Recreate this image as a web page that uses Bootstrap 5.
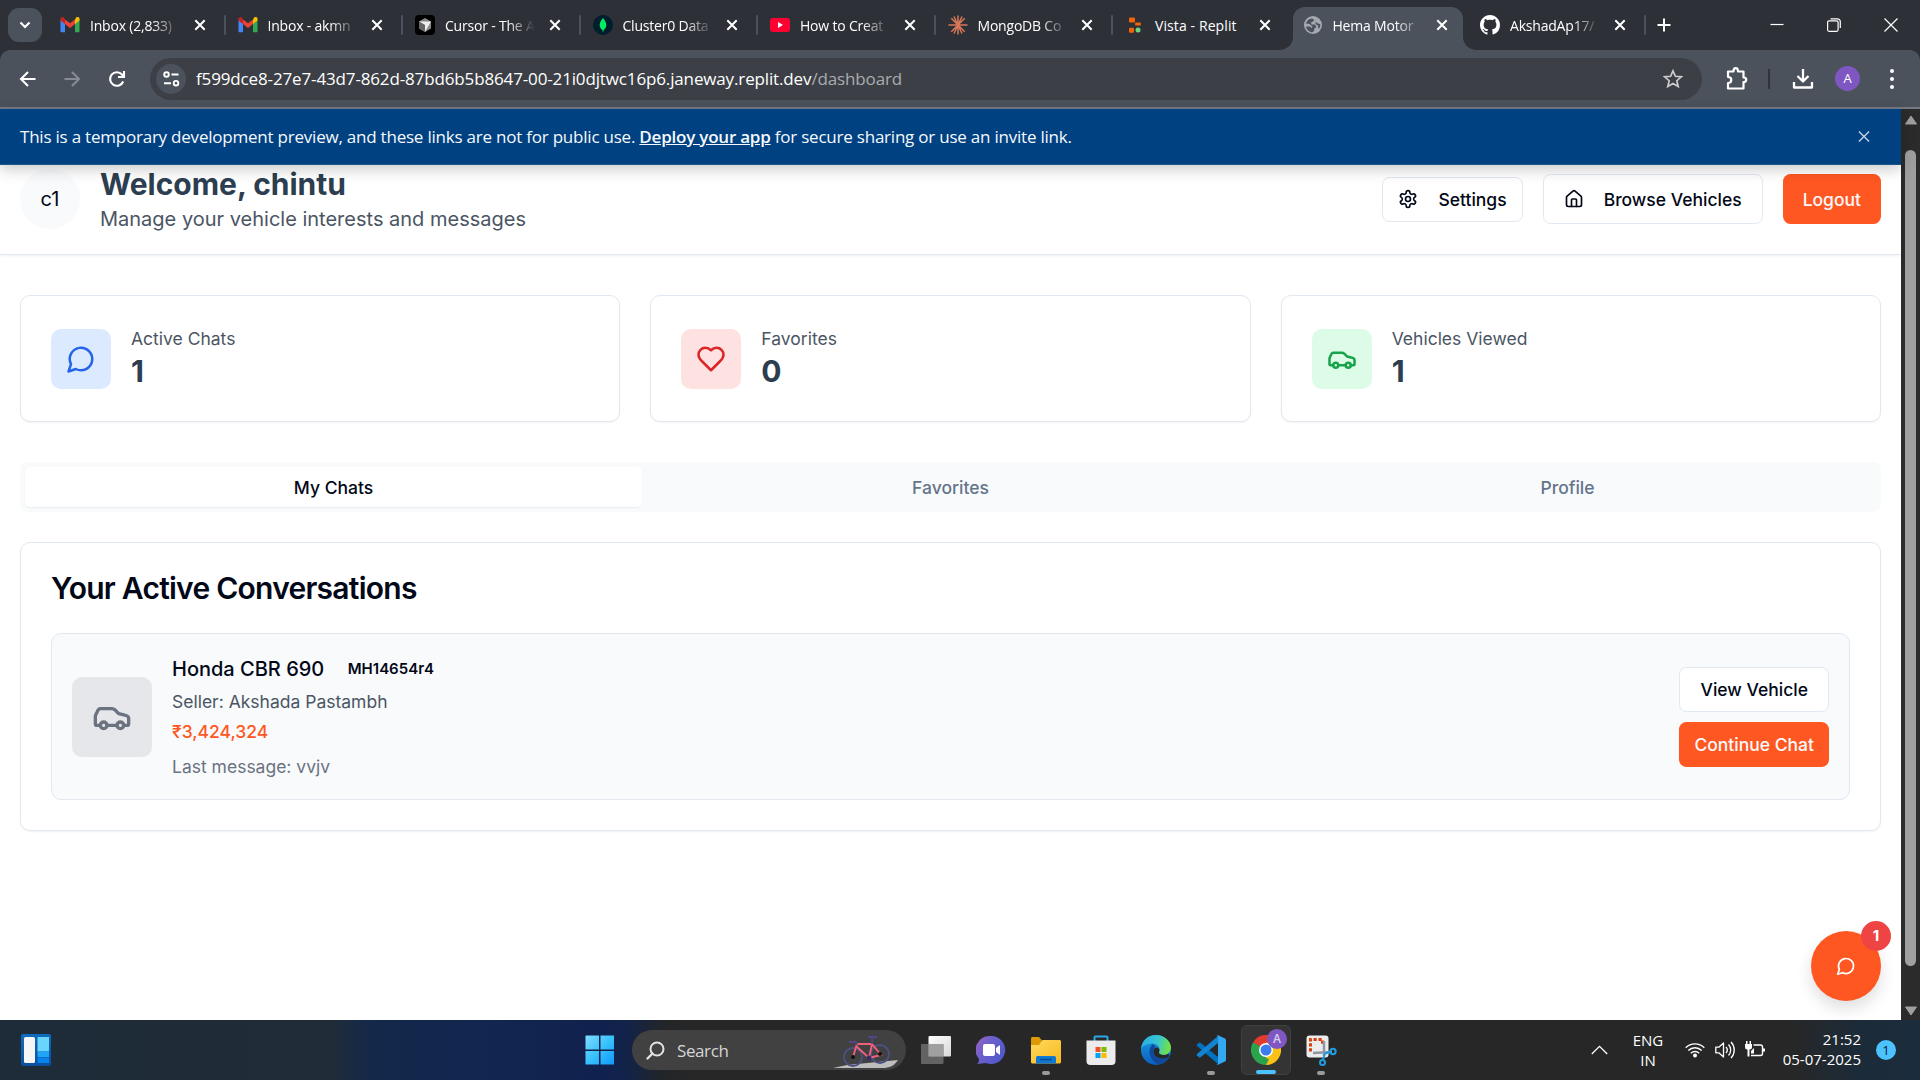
<!DOCTYPE html>
<html lang="en">
<head>
<meta charset="utf-8">
<title>Hema Motor</title>
<meta name="viewport" content="width=device-width, initial-scale=1">
<link href="https://cdn.jsdelivr.net/npm/bootstrap@5.3.0/dist/css/bootstrap.min.css" rel="stylesheet">
<style>
body{width:1920px;height:1080px;overflow:hidden;background:#fff;font-family:Inter,"Noto Sans",sans-serif;font-size:17.5px;line-height:25px;color:#020817}
svg{display:block;flex:none}
.ui{font-family:"Open Sans","Noto Sans",sans-serif}
/* browser chrome */
.tabstrip{height:50px;background:#2e3038;color:#fff;font-size:14px;line-height:20px}
.tabsearch{width:34px;height:34px;border-radius:11px;background:#4c525c;margin:8px 5px 0 8px}
.btab{width:177.5px;height:50px;padding:0 19px 0 13px;position:relative}
.btab .fav{width:20px;height:20px;flex:none;margin-right:10px}
.btab .ttl{min-width:86px;padding-top:1px;white-space:nowrap;letter-spacing:-.2px;-webkit-mask-image:linear-gradient(90deg,#000 62px,transparent 90px);mask-image:linear-gradient(90deg,#000 62px,transparent 90px)}
.btab .ttl.whole{-webkit-mask-image:none;mask-image:none;letter-spacing:.1px}
.btab .cls{margin-left:auto}
.btab.sep::after{content:"";position:absolute;right:-1px;top:15px;width:2px;height:20px;background:#4c525c;border-radius:1px}
.btab.live .plate{position:absolute;left:-11px;top:7px;z-index:0}
.btab.live>*:not(.plate){position:relative;z-index:1}
.toolbar-wrap{background:#2e3038}
.toolbar{height:59px;background:#4c525c;border-bottom:2px solid #757b85;border-radius:10px 10px 0 0}
.omni{width:1552px;height:42px;border-radius:21px;background:#3c3f46;margin-left:23px;padding:0 19px 0 6px}
.siteinfo{width:30px;height:30px;border-radius:50%;background:#4c525c;margin-right:10px}
.url{font-size:17px;color:#fff;letter-spacing:-.14px;white-space:nowrap}
.url i{font-style:normal;color:#a9acb1}
.pfp{width:25px;height:25px;border-radius:50%;background:#7e57c2;font-size:13px;line-height:25px;color:#fff}
/* page */
.viewport{height:911px}
.pagecol{width:1901px;position:relative}
.banner{height:56px;background:#004182;border-bottom:1px solid #1c548e;color:#f5f9fc;font-size:17px;letter-spacing:-.22px;padding:0 31px 0 20px;position:relative;z-index:2;box-shadow:0 4px 14px rgba(0,0,0,.22);white-space:nowrap}
.banner a{color:#f5f9fc;font-weight:600}
.pagehead{height:91px;margin-top:-1px;padding:0 20px 20px;border-bottom:1px solid #e2e8f0;box-shadow:0 1px 3px rgba(0,0,0,.06);background:#fff}
.avatar{width:60px;height:60px;border-radius:50%;background:#f8fafc;font-size:20px}
.h-welcome{font-size:30px;line-height:40px;font-weight:700;color:#2c3e50;margin:0}
.sub{font-size:20px;line-height:30px;color:#4b5563;margin:0}
.xbtn{height:50px;border:1px solid #e2e8f0;border-radius:7.5px;background:#fff;font-weight:500;font-size:17.5px;color:#020817;padding:0 20px;white-space:nowrap;display:inline-flex;align-items:center;justify-content:center}
.xbtn.short{height:45px;padding:0 15px}
.xbtn.fire{background:#ff5722;border:0;color:#f8fafc}
.panel{border:1px solid #e2e8f0;border-radius:10px;background:#fff;box-shadow:0 1px 2px rgba(0,0,0,.05)}
.stats{gap:30px;padding:40px 20px 0}
.stat{flex:1 1 0;height:127px;padding:0 30px}
.chip{width:60px;height:60px;border-radius:10px}
.stat .lbl{color:#4b5563}
.stat .num{font-size:30px;line-height:40px;font-weight:700;color:#2c3e50}
.seg{height:50px;margin:40px 20px 0;padding:5px;border-radius:7.5px;background:#f8fafc;color:#64748b;font-weight:500}
.seg div{flex:1 1 0;height:40px;line-height:41px;text-align:center;border-radius:5px}
.seg .on{background:#fff;color:#020817;box-shadow:0 1px 2px rgba(0,0,0,.06)}
.convs{margin:30px 20px 0;height:289px;padding:30px}
.convs h2{font-size:30px;line-height:30px;font-weight:600;letter-spacing:-.75px;margin:0 0 30px}
.conv{height:167px;background:#f8fafc;border:1px solid #e2e8f0;border-radius:10px;padding:19px 20px 20px}
.thumb{width:80px;height:80px;border-radius:10px;background:#e5e7eb;margin-top:2px}
.acts{gap:10px;margin-top:2px}
.fab{position:absolute;left:1811px;top:822px;width:70px;height:70px;border-radius:50%;background:#ff5722;box-shadow:0 8px 16px rgba(0,0,0,.13)}
.fab .cnt{position:absolute;left:50px;top:-10px;width:30px;height:30px;border-radius:50%;background:#ef4444;color:#fff;font-size:15px;font-weight:700;line-height:30px;text-align:center}
.sbar{width:19px;background:#2b2b2b}
.sbar .thumbbar{width:11px;height:816px;border-radius:6px;background:#9f9f9f}
/* taskbar */
.taskbar{height:60px;color:#fff;background:linear-gradient(90deg,#1e2c39 0,#202c37 330px,#14284a 370px,#122650 480px,#11214f 600px,#12234a 625px,#232527 665px,#272727 700px,#272727 1790px,#1c2b39 1860px,#1b2c3c 1920px)}
.searchbox{width:274px;height:40px;border-radius:20px;background:#414141;color:#d5d5d5;font-size:17px;letter-spacing:-.4px;padding:0 5px 0 14px;margin-left:17px;overflow:hidden}
.app{width:50px;height:50px;margin-right:5px;position:relative;border-radius:6px}
.app.on{background:#343434;border:1px solid #404040}
.app .pip{position:absolute;left:21px;bottom:0;width:8px;height:4px;border-radius:2px;background:#9a9a9a}
.app.on .pip{left:14px;width:20px;background:#4cc2ff}
.app .mini{position:absolute;left:25px;top:3px;width:20px;height:20px;border-radius:50%;background:#7e57c2;color:#d9cdee;font-size:12px;line-height:20px;text-align:center;font-weight:600}
.tray{font-size:15px;line-height:20px}
.note{width:20px;height:20px;border-radius:50%;background:#4cc2ff;color:#10202c;font-size:13px;line-height:20px;text-align:center}
</style>
<script src="https://cdn.jsdelivr.net/npm/bootstrap@5.3.0/dist/js/bootstrap.bundle.min.js"></script>
</head>
<body>
<svg width="0" height="0" class="position-absolute">
<defs>
<symbol id="x" viewBox="0 0 12 12"><path d="M1.300 1.300l9.400 9.400M10.700 1.300l-9.400 9.400" stroke="currentColor" stroke-width="2" fill="none"/></symbol>
<symbol id="gm" viewBox="0 0 20 20"><path d="M.5 4v12.200c0 .6.4 1 1 1H5V8z" fill="#4285f4"/><path d="M15 8v9.200h3.500c.6 0 1-.4 1-1V4z" fill="#34a853"/><path d="M15 4.500V9l4.500-3.500V4c0-2-2-2.500-3.300-1.500z" fill="#fbbc04"/><path d="M5 9V4.500l5 3.700 5-3.700V9l-5 3.900z" fill="#ea4335"/><path d="M.5 4v1.500L5 9V4.500L3.800 2.500C2.500 1.500.5 2.200.5 4z" fill="#c5221f"/></symbol>
<symbol id="msg" viewBox="0 0 24 24"><path d="M7.900 20A9 9 0 1 0 4 16.100L2 22Z" fill="none" stroke="currentColor" stroke-width="2" stroke-linecap="round" stroke-linejoin="round"/></symbol>
<symbol id="car" viewBox="0 0 24 24"><g fill="none" stroke="currentColor" stroke-width="2" stroke-linecap="round" stroke-linejoin="round"><path d="M19 17h2c.6 0 1-.4 1-1v-3c0-.9-.7-1.700-1.500-1.900C18.700 10.600 16 10 16 10s-1.300-1.400-2.200-2.300c-.5-.4-1.100-.7-1.800-.7H5c-.6 0-1.100.4-1.400.9l-1.400 2.900A3.700 3.700 0 0 0 2 12v4c0 .6.4 1 1 1h2"/><circle cx="7" cy="17" r="2"/><path d="M9 17h6"/><circle cx="17" cy="17" r="2"/></g></symbol>
</defs>
</svg>

<div class="tabstrip ui d-flex">
  <div class="tabsearch d-flex align-items-center justify-content-center"><svg width="12" height="8" viewBox="0 0 12 8"><path d="M1.500 1.500L6 6l4.500-4.500" fill="none" stroke="#fff" stroke-width="2.200"/></svg></div>
  <div class="btab sep d-flex align-items-center"><svg class="fav"><use href="#gm"/></svg><span class="ttl">Inbox (2,833)</span><svg class="cls" width="12" height="12"><use href="#x"/></svg></div>
  <div class="btab sep d-flex align-items-center"><svg class="fav"><use href="#gm"/></svg><span class="ttl">Inbox - akmn</span><svg class="cls" width="12" height="12"><use href="#x"/></svg></div>
  <div class="btab sep d-flex align-items-center"><svg class="fav" viewBox="0 0 20 20"><rect width="20" height="20" rx="4" fill="#000"/><path d="M10 3l6 3.500v7L10 17l-6-3.500v-7z" fill="#888"/><path d="M4 6.500h12L10 17V10z" fill="#eee"/><path d="M4 6.500L10 10v7l-6-3.500z" fill="#666"/></svg><span class="ttl">Cursor - The A</span><svg class="cls" width="12" height="12"><use href="#x"/></svg></div>
  <div class="btab sep d-flex align-items-center"><svg class="fav" viewBox="0 0 20 20"><circle cx="10" cy="10" r="10" fill="#001e2b"/><path d="M10 3c2 2.300 3.300 4.600 3.300 7 0 2.500-1.300 4-2.800 5.200l-.3 2h-.4l-.3-2C8 14 6.700 12.500 6.700 10c0-2.400 1.300-4.700 3.300-7z" fill="#00ed64"/></svg><span class="ttl">Cluster0 Data</span><svg class="cls" width="12" height="12"><use href="#x"/></svg></div>
  <div class="btab sep d-flex align-items-center"><svg class="fav" viewBox="0 0 20 20"><rect y="3" width="20" height="14" rx="3" fill="#ff0033"/><path d="M8 7l5 3-5 3z" fill="#fff"/></svg><span class="ttl">How to Creat</span><svg class="cls" width="12" height="12"><use href="#x"/></svg></div>
  <div class="btab sep d-flex align-items-center"><svg class="fav" viewBox="0 0 20 20"><path d="M10 .5v19M.5 10h19M3.300 3.300l13.400 13.400M16.700 3.300L3.300 16.700M6 1.500l8 17M14 1.500l-8 17" stroke="#d97757" stroke-width="1.500"/></svg><span class="ttl">MongoDB Co</span><svg class="cls" width="12" height="12"><use href="#x"/></svg></div>
  <div class="btab d-flex align-items-center"><svg class="fav" viewBox="0 0 20 20"><rect x="4" y="2.500" width="6" height="5" rx="1" fill="#f26207"/><rect x="10" y="7.500" width="6" height="3" rx="1" fill="#f26207"/><rect x="4" y="12.800" width="5" height="5" rx="1" fill="#f26207"/><rect x="10.500" y="12.500" width="5" height="5" rx="2.500" fill="#6bd47c"/></svg><span class="ttl whole">Vista - Replit</span><svg class="cls" width="12" height="12"><use href="#x"/></svg></div>
  <div class="btab live d-flex align-items-center"><svg class="plate" width="198" height="43" viewBox="0 0 198 43"><path d="M0 43c8 0 14-6 14-13V12C14 5 19 0 26 0h146c7 0 12 5 12 12v18c0 7 6 13 14 13z" fill="#4c525c"/></svg><svg class="fav" viewBox="0 0 20 20"><circle cx="10" cy="10" r="9" fill="#a5a9b0"/><path d="M2.800 8.500C4 5.500 6 4 8.500 3.500l2.500.8-.5 2L8 7.500 8.500 9.500H12l1.500 2.500-2 1.500-.5 2.500-2 1.500C5 16.500 3.200 14 3 11.500l4 0L8.500 13l1-1.200L6.500 9zM13 4l-.5 3 3 1.800 1.800.2c0 3-.5 4-1.800 5l-.5-3.500-2.500-1.500z" fill="#4c525c"/></svg><span class="ttl">Hema Motor</span><svg class="cls" width="12" height="12"><use href="#x"/></svg></div>
  <div class="btab sep d-flex align-items-center"><svg class="fav" viewBox="0 0 16 16"><path fill="#fff" d="M8 0C3.580 0 0 3.580 0 8c0 3.540 2.290 6.530 5.470 7.590.4.070.55-.17.55-.38 0-.19-.01-.82-.01-1.490-2.010.37-2.530-.49-2.690-.94-.09-.23-.48-.94-.82-1.130-.28-.15-.68-.52-.01-.53.63-.01 1.080.58 1.230.82.72 1.210 1.870.87 2.330.66.07-.52.28-.87.51-1.070-1.780-.2-3.640-.89-3.640-3.950 0-.87.31-1.590.82-2.150-.08-.2-.36-1.020.08-2.120 0 0 .67-.21 2.200.82.64-.18 1.320-.27 2-.27s1.360.09 2 .27c1.530-1.040 2.200-.82 2.200-.82.44 1.100.16 1.920.08 2.120.51.56.82 1.270.82 2.150 0 3.070-1.870 3.750-3.650 3.950.29.25.54.73.54 1.480 0 1.070-.01 1.930-.01 2.200 0 .21.15.46.55.38A8.010 8.010 0 0 0 16 8c0-4.420-3.580-8-8-8z"/></svg><span class="ttl">AkshadAp17/</span><svg class="cls" width="12" height="12"><use href="#x"/></svg></div>
  <div class="d-flex align-items-center" style="margin-left:12px"><svg width="14" height="14" viewBox="0 0 14 14"><path d="M7 .5v13M.5 7h13" stroke="#fff" stroke-width="2"/></svg></div>
  <div class="d-flex align-items-center ms-auto" style="gap:43px;margin-right:22px">
    <svg width="14" height="14" viewBox="0 0 14 14"><path d="M.5 6.500h13" stroke="#fff" stroke-width="1.200"/></svg>
    <svg width="14" height="14" viewBox="0 0 14 14"><rect x=".6" y="2.800" width="10.500" height="10.500" rx="1.500" fill="none" stroke="#fff" stroke-width="1.200"/><path d="M3.500.8h7a2.800 2.800 0 0 1 2.800 2.800v6.500" fill="none" stroke="#fff" stroke-width="1.200"/></svg>
    <svg width="14" height="14" viewBox="0 0 14 14"><path d="M.5.5l13 13M13.500.5l-13 13" stroke="#fff" stroke-width="1.200"/></svg>
  </div>
</div>

<div class="toolbar-wrap ui"><div class="toolbar d-flex align-items-center">
  <svg style="margin-left:19px" width="18" height="18" viewBox="0 0 18 18"><path d="M16.500 9H2.500M9 2L2 9l7 7" fill="none" stroke="#fff" stroke-width="2.100"/></svg>
  <svg style="margin-left:26px" width="18" height="18" viewBox="0 0 18 18"><path d="M1.500 9h14M9 2l7 7-7 7" fill="none" stroke="#868b93" stroke-width="2.100"/></svg>
  <svg style="margin-left:27px" width="18" height="18" viewBox="0 0 18 18"><path d="M15.200 11.500A6.800 6.800 0 1 1 14 4.500L16 6.500" fill="none" stroke="#fff" stroke-width="2.100"/><path d="M16 1v6h-6" fill="none" stroke="#fff" stroke-width="2.100"/></svg>
  <div class="omni d-flex align-items-center" style="margin-left:24px">
    <div class="siteinfo d-flex align-items-center justify-content-center"><svg width="17" height="16" viewBox="0 0 17 16"><g fill="none" stroke="#fff" stroke-width="1.900"><circle cx="3.500" cy="3.500" r="2.300"/><path d="M8.500 3.500h7M1 12.200h7"/><circle cx="13" cy="12.200" r="2.300"/></g></svg></div>
    <span class="url">f599dce8-27e7-43d7-862d-87bd6b5b8647-00-21i0djtwc16p6.janeway.replit.dev<i>/dashboard</i></span>
    <svg class="ms-auto" width="20" height="20" viewBox="0 0 20 20"><path d="M10 1.800l2.400 5.500 6 .5-4.600 3.900 1.400 5.900-5.200-3.100-5.200 3.100 1.400-5.900L1.600 7.800l6-.5z" fill="none" stroke="#c9cbce" stroke-width="1.700"/></svg>
  </div>
  <svg style="margin-left:24px" width="22" height="26" viewBox="0 0 22 26"><path d="M2 5.500h5.500C7.500 3 8.300 2.200 9.700 2.200S12 3 12 5.500h5.500v6c1.900 0 2.700.8 2.700 2.200s-.8 2.300-2.700 2.300v6.500H2V17c2.500 0 3.300-1.300 3.300-3S4.500 11 2 11z" fill="none" stroke="#fff" stroke-width="2.200" stroke-linejoin="round"/></svg>
  <div style="margin-left:20px;width:2px;height:20px;background:#30333a"></div>
  <svg style="margin-left:22px" width="22" height="22" viewBox="0 0 22 22"><path d="M11 1v12M5.500 8L11 13.500 16.500 8M2 14v5.500h18V14" fill="none" stroke="#fff" stroke-width="2.300" stroke-linejoin="round"/></svg>
  <div class="pfp text-center" style="margin-left:21px">A</div>
  <svg style="margin-left:30px" width="4" height="22" viewBox="0 0 4 22"><g fill="#fff"><circle cx="2" cy="3" r="2"/><circle cx="2" cy="11" r="2"/><circle cx="2" cy="19" r="2"/></g></svg>
</div></div>

<div class="viewport d-flex">
  <main class="pagecol">
    <div class="banner ui d-flex align-items-center"><span>This is a temporary development preview, and these links are not for public use. <a href="#">Deploy your app</a> for secure sharing or use an invite link.</span>
      <svg class="ms-auto" width="12" height="13" viewBox="0 0 13 13"><path d="M1 1l11 11M12 1L1 12" stroke="#c5d5e5" stroke-width="1.500"/></svg></div>
    <header class="pagehead d-flex align-items-center">
      <div class="avatar d-flex align-items-center justify-content-center">c1</div>
      <div style="margin-left:20px"><h1 class="h-welcome">Welcome, chintu</h1><p class="sub">Manage your vehicle interests and messages</p></div>
      <div class="d-flex align-items-center ms-auto" style="gap:20px">
        <a class="xbtn short text-decoration-none"><svg width="20" height="20" viewBox="0 0 24 24" style="margin-right:20px"><g fill="none" stroke="currentColor" stroke-width="2" stroke-linecap="round" stroke-linejoin="round"><path d="M12.220 2h-.44a2 2 0 0 0-2 2v.18a2 2 0 0 1-1 1.730l-.43.25a2 2 0 0 1-2 0l-.15-.08a2 2 0 0 0-2.730.73l-.22.38a2 2 0 0 0 .73 2.730l.15.1a2 2 0 0 1 1 1.720v.51a2 2 0 0 1-1 1.740l-.15.09a2 2 0 0 0-.73 2.730l.22.38a2 2 0 0 0 2.730.73l.15-.08a2 2 0 0 1 2 0l.43.25a2 2 0 0 1 1 1.730V20a2 2 0 0 0 2 2h.44a2 2 0 0 0 2-2v-.18a2 2 0 0 1 1-1.730l.43-.25a2 2 0 0 1 2 0l.15.08a2 2 0 0 0 2.730-.73l.22-.39a2 2 0 0 0-.73-2.730l-.15-.08a2 2 0 0 1-1-1.740v-.5a2 2 0 0 1 1-1.740l.15-.09a2 2 0 0 0 .73-2.730l-.22-.38a2 2 0 0 0-2.730-.73l-.15.08a2 2 0 0 1-2 0l-.43-.25a2 2 0 0 1-1-1.730V4a2 2 0 0 0-2-2z"/><circle cx="12" cy="12" r="3"/></g></svg><span>Settings</span></a>
        <a class="xbtn text-decoration-none"><svg width="20" height="20" viewBox="0 0 24 24" style="margin-right:20px"><g fill="none" stroke="currentColor" stroke-width="2" stroke-linecap="round" stroke-linejoin="round"><path d="M15 21v-8a1 1 0 0 0-1-1h-4a1 1 0 0 0-1 1v8"/><path d="M3 10a2 2 0 0 1 .709-1.528l7-5.999a2 2 0 0 1 2.582 0l7 5.999A2 2 0 0 1 21 10v9a2 2 0 0 1-2 2H5a2 2 0 0 1-2-2z"/></g></svg><span>Browse Vehicles</span></a>
        <a class="xbtn fire text-decoration-none">Logout</a>
      </div>
    </header>
    <section class="stats d-flex">
      <div class="panel stat d-flex align-items-center"><div class="chip d-flex align-items-center justify-content-center" style="background:#dbeafe;color:#2563eb"><svg width="30" height="30"><use href="#msg"/></svg></div><div style="margin-left:20px"><div class="lbl">Active Chats</div><div class="num">1</div></div></div>
      <div class="panel stat d-flex align-items-center"><div class="chip d-flex align-items-center justify-content-center" style="background:#fee2e2;color:#dc2626"><svg width="30" height="30" viewBox="0 0 24 24"><path d="M19 14c1.490-1.460 3-3.210 3-5.500A5.500 5.500 0 0 0 16.500 3c-1.760 0-3 .5-4.500 2-1.500-1.500-2.740-2-4.500-2A5.500 5.500 0 0 0 2 8.500c0 2.300 1.500 4.050 3 5.500l7 7Z" fill="none" stroke="currentColor" stroke-width="2" stroke-linecap="round" stroke-linejoin="round"/></svg></div><div style="margin-left:20px"><div class="lbl">Favorites</div><div class="num">0</div></div></div>
      <div class="panel stat d-flex align-items-center"><div class="chip d-flex align-items-center justify-content-center" style="background:#dcfce7;color:#16a34a"><svg width="30" height="30"><use href="#car"/></svg></div><div style="margin-left:20px"><div class="lbl">Vehicles Viewed</div><div class="num">1</div></div></div>
    </section>
    <nav class="seg d-flex"><div class="on">My Chats</div><div>Favorites</div><div>Profile</div></nav>
    <section class="panel convs">
      <h2>Your Active Conversations</h2>
      <div class="conv d-flex align-items-center">
        <div class="thumb d-flex align-items-center justify-content-center" style="color:#6b7280"><svg width="40" height="40"><use href="#car"/></svg></div>
        <div style="margin-left:20px">
          <div class="d-flex align-items-center" style="font-size:20px;line-height:30px;font-weight:500"><span>Honda CBR 690</span><span style="font-size:15px;font-weight:600;margin-left:23.500px">MH14654r4</span></div>
          <div style="margin-top:5px;color:#4b5563">Seller: Akshada Pastambh</div>
          <div style="margin-top:5px;color:#ff5722;font-weight:500">₹3,424,324</div>
          <div style="margin-top:10px;color:#6b7280">Last message: vvjv</div>
        </div>
        <div class="acts ms-auto d-flex flex-column"><a class="xbtn short text-decoration-none">View Vehicle</a><a class="xbtn short fire text-decoration-none">Continue Chat</a></div>
      </div>
    </section>
    <div class="fab d-flex align-items-center justify-content-center text-white"><svg width="20" height="20"><use href="#msg"/></svg><span class="cnt">1</span></div>
  </main>
  <div class="sbar d-flex flex-column align-items-center">
    <svg width="14" height="10" viewBox="0 0 14 10" style="margin:6px 0 25px"><path d="M7 1l5.500 8h-11z" fill="#9f9f9f" stroke="#9f9f9f" stroke-linejoin="round"/></svg>
    <div class="thumbbar"></div>
    <svg width="14" height="10" viewBox="0 0 14 10" style="margin-top:40px"><path d="M7 9l5.500-8h-11z" fill="#9f9f9f" stroke="#9f9f9f" stroke-linejoin="round"/></svg>
  </div>
</div>

<footer class="taskbar ui d-flex align-items-center">
  <svg width="30" height="32" viewBox="0 0 30 32" style="margin-left:21px"><defs><linearGradient id="wg" x2="0" y2="1"><stop stop-color="#0f6cbd"/><stop offset="1" stop-color="#0b4f9e"/></linearGradient></defs><rect width="30" height="32" rx="2" fill="url(#wg)"/><rect x="3" y="3" width="11" height="26" rx="1.500" fill="#f5f5f5"/><path d="M16.500 3H28v14.500H16.500z" fill="#69d4fc"/><path d="M16.500 17.500H28V23H16.500z" fill="#1fa4f8"/><path d="M16.500 23.500H28V29H16.500z" fill="#0a84ec"/></svg>
  <svg width="30" height="30" viewBox="0 0 30 30" style="margin-left:534px"><defs><linearGradient id="sg" x2="1" y2="1"><stop stop-color="#82dcff"/><stop offset=".5" stop-color="#39c2fb"/><stop offset="1" stop-color="#0f98fa"/></linearGradient></defs><path d="M1 .5h13v14H.5V1zM15.500.5H29v14H15.500zM.5 16H14v13.500H.5zM15.500 16H29v13.500H15.500z" fill="url(#sg)"/></svg>
  <div class="searchbox d-flex align-items-center">
    <svg width="19" height="19" viewBox="0 0 19 19"><circle cx="11" cy="8" r="6.500" fill="none" stroke="#e2e2e2" stroke-width="2"/><path d="M6.500 12.500L1.500 17.500" stroke="#e2e2e2" stroke-width="2.400" stroke-linecap="round"/></svg>
    <span style="margin-left:12px">Search</span>
    <svg class="ms-auto" width="68" height="40" viewBox="0 0 68 40"><path d="M0 38l14-3 51-5c-4 6-8 8-16 8z" fill="#bdbdbd"/><g fill="none" stroke="#4d5085" stroke-width="1.900"><circle cx="20" cy="27" r="9"/><circle cx="47" cy="24" r="9"/></g><path d="M20 27l4-13h15l-3 14-13-12M39 14l9 11-12 3" fill="none" stroke="#f0607a" stroke-width="1.900"/><path d="M39 14V8m-4-1h9M16 12h7l1 3" fill="none" stroke="#54448a" stroke-width="1.800"/><circle cx="36" cy="28" r="2.500" fill="#3a2f63"/><circle cx="20" cy="27" r="2" fill="#111"/><circle cx="47" cy="24" r="2" fill="#111"/></svg>
  </div>
  <div class="d-flex" style="margin-left:5px">
    <div class="app d-flex align-items-center justify-content-center"><svg width="30" height="30" viewBox="0 0 30 30"><defs><linearGradient id="tv" x2="1" y2="1"><stop stop-color="#fff"/><stop offset="1" stop-color="#d8d8d8"/></linearGradient></defs><rect x="7.500" y="1" width="22.500" height="20.500" rx="1" fill="url(#tv)"/><rect y="9" width="22.500" height="20" rx="1" fill="#6e6e6e" opacity=".85"/><path d="M7.500 9h15v12.500h-15z" fill="#a0a0a0"/></svg></div>
    <div class="app d-flex align-items-center justify-content-center"><svg width="30" height="30" viewBox="0 0 30 30"><defs><linearGradient id="ch" x1="0" x2="1" y2=".6"><stop stop-color="#9a63c0"/><stop offset=".5" stop-color="#6a5fcd"/><stop offset="1" stop-color="#5059c9"/></linearGradient></defs><path d="M15 1a14 14 0 1 1-5 27l-9 1c2-2 2-3 2-5A14 14 0 0 1 15 1z" fill="url(#ch)"/><rect x="7" y="9" width="12" height="12" rx="2" fill="#fff"/><path d="M20 13l4-3v10l-4-3z" fill="#fff"/></svg></div>
    <div class="app d-flex align-items-center justify-content-center"><svg width="30" height="30" viewBox="0 0 30 30"><defs><linearGradient id="fo" x2="1" y2="1"><stop stop-color="#ffd960"/><stop offset="1" stop-color="#f8b81c"/></linearGradient></defs><path d="M0 3.500C0 2.700.7 2 1.500 2H8l3 3.500V12H0z" fill="#dc9b06"/><path d="M0 10h8l3.500-5H29l1 1v21.500l-1 1H1l-1-1z" fill="url(#fo)"/><path d="M5 28.500V23c0-1.500.8-2 2-2h16c1.300 0 2 .7 2 2v5.500z" fill="#0f78d0"/><path d="M9 24.500h12" stroke="#064b94" stroke-width="1.500"/></svg><span class="pip"></span></div>
    <div class="app d-flex align-items-center justify-content-center"><svg width="30" height="30" viewBox="0 0 30 30"><path d="M8.500 6V2.500q0-1 1-1h11q1 0 1 1V6" fill="none" stroke="#29a8ea" stroke-width="2"/><path d="M.5 5.500h29V26q0 4-4 4H4.500q-4 0-4-4z" fill="#ececec"/><path d="M9.500 12h5v5h-5z" fill="#f25022"/><path d="M15.500 12h5v5h-5z" fill="#7fba00"/><path d="M9.500 18h5v5h-5z" fill="#00a4ef"/><path d="M15.500 18h5v5h-5z" fill="#ffb900"/></svg></div>
    <div class="app d-flex align-items-center justify-content-center"><svg width="30" height="30" viewBox="0 0 30 30"><defs><linearGradient id="e1" x1="0" x2="1" y2=".2"><stop stop-color="#2ba8e8"/><stop offset=".6" stop-color="#36c6d0"/><stop offset="1" stop-color="#6fe04c"/></linearGradient><linearGradient id="e2" x2="0" y2="1"><stop stop-color="#1b9de2"/><stop offset="1" stop-color="#0a5fc0"/></linearGradient></defs><circle cx="15" cy="15" r="15" fill="url(#e2)"/><path d="M0 14C1 5 7 0 15 0s15 6 15 12.500c0 4-3 7.500-8 7.500-3 0-4.500-1-4.500-2s1-1.500 1-4c0-3-3-5.500-7-5.500S2 10 0 14z" fill="url(#e1)"/><path d="M12 9c-2.500 2-3.500 4.500-3.500 7.500 0 6 4 11 9 13 5-1 8-3.500 10-7-8 3-15-1-15-7 0-2 1-3 2-4z" fill="#10489c"/><path d="M18 17.500c0 1.500 2 2.500 4.500 2.500 2 0 3.500-.5 5-1.500l1 3C23 25 12.500 24 12.500 15.500c0-2 2-3.500 3.500-3 2 .5 2.500 2 2.500 3z" fill="#272727"/></svg></div>
    <div class="app d-flex align-items-center justify-content-center"><svg width="30" height="30" viewBox="0 0 30 30"><path d="M1 9.500l2-1.800q.7-.5 1.500 0L22 22v7L1 11q-.7-.8 0-1.500z" fill="#0072bf"/><path d="M1 20.500l2 1.800q.7.500 1.500 0L22 8V1L1 19q-.7.800 0 1.500z" fill="#1284d2"/><path d="M22 .3l7 3.200q1 .5 1 1.500v20q0 1-1 1.500l-7 3.200q-1 .2-1.500-.5 1.500.3 1.500-1.200V2q0-1.500-1.500-1.200.5-.7 1.500-.5z" fill="#32a9f0"/></svg><span class="pip"></span></div>
    <div class="app on d-flex align-items-center justify-content-center"><svg width="30" height="30" viewBox="0 0 30 30"><path d="M15 15L2 7.500A15 15 0 0 1 28 7.500z" fill="#e23b2e"/><path d="M15 15L2 7.500A15 15 0 0 0 15 30l6.500-11.300z" fill="#2ba24c"/><path d="M15 15l0 15A15 15 0 0 0 28 7.500H15z" fill="#fbc116"/><path d="M8.500 18.700L2 7.500 15 15z" fill="#2ba24c"/><path d="M15 30l6.500-11.300H15z" fill="#fbc116"/><path d="M8.500 18.700L15 30l3-5.500z" fill="#2ba24c"/><circle cx="15" cy="15" r="7" fill="#fff"/><circle cx="15" cy="15" r="5.500" fill="#3b7ded"/></svg><span class="mini">A</span><span class="pip"></span></div>
    <div class="app d-flex align-items-center justify-content-center"><svg width="31" height="31" viewBox="0 0 31 31"><rect x=".5" y=".5" width="22" height="22" rx="3" fill="#ececec"/><path d="M4.500 16.500v-12h12v5" fill="none" stroke="#d9400f" stroke-width="3" stroke-dasharray="3.200 1.800"/><path d="M7 18l19-1M18 6v15" stroke="#8c98a3" stroke-width="2.500"/><g fill="none" stroke="#1f9de0" stroke-width="2"><circle cx="27" cy="16.500" r="2.700"/><circle cx="16.500" cy="27.500" r="2.500"/><path d="M24 17l-5 1.500-2 6"/></g></svg><span class="pip"></span></div>
  </div>
  <div class="tray d-flex align-items-center ms-auto">
    <svg width="17" height="10" viewBox="0 0 17 10"><path d="M.8 9l7.700-7.700L16.200 9" fill="none" stroke="#fff" stroke-width="1.300"/></svg>
    <div class="text-center" style="width:40px;margin:0 17px 0 20px">ENG<br>IN</div>
    <svg width="20" height="16" viewBox="0 0 20 16"><g fill="none" stroke="#fff" stroke-width="1.400"><path d="M.7 5.700a13.200 13.200 0 0 1 18.600 0M3.300 8.500a9.500 9.500 0 0 1 13.400 0M5.900 11.200a5.800 5.800 0 0 1 8.200 0"/></g><circle cx="10" cy="13.500" r="2" fill="#fff"/></svg>
    <svg width="20" height="18" viewBox="0 0 20 18" style="margin-left:10px"><g fill="none" stroke="#fff" stroke-width="1.300"><path d="M.8 6.200h3L8.500 2v14l-4.700-4.200h-3z" stroke-linejoin="round"/><path d="M11 6a4.500 4.500 0 0 1 0 6M13.500 3.500a8 8 0 0 1 0 11M16 1a11.500 11.500 0 0 1 0 16"/></g></svg>
    <svg width="20" height="18" viewBox="0 0 20 18" style="margin-left:10px"><path d="M8.500 4h7q2 0 2 2v6.500q0 2-2 2H6" fill="none" stroke="#fff" stroke-width="1.400"/><path d="M18 7.500h2v3h-2z" fill="#fff"/><path d="M0 3h7v3q0 2.500-2.500 2.500v7h-2v-7Q0 8.500 0 6zM1 0h1.500v3H1zM4.500 0H6v3H4.500zM6 12.500V10l3-3v5.500z" fill="#fff"/></svg>
    <div class="text-end" style="width:90px;margin-left:6px;margin-bottom:2px">21:52<br>05-07-2025</div>
    <div class="note" style="margin:0 24px 0 15px">1</div>
  </div>
</footer>
</body>
</html>
